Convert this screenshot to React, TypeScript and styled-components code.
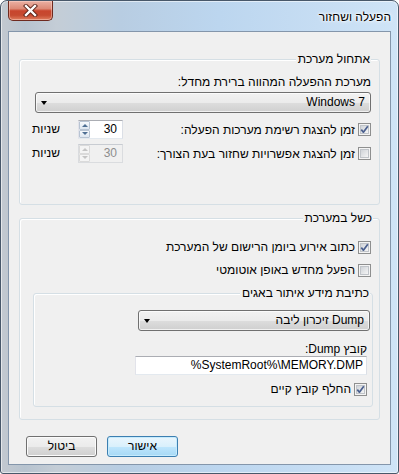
import React from 'react'
import styled, { createGlobalStyle } from 'styled-components'

const GlobalStyle = createGlobalStyle`
  html, body {
    margin: 0;
    padding: 0;
    background: #ffffff;
  }
  body {
    font-family: "Liberation Sans", "DejaVu Sans", sans-serif;
    font-size: 12px;
    color: #000;
  }
`

const Frame = styled.div`
  width: 399px;
  height: 474px;
  box-sizing: border-box;
  border: 1px solid #48586a;
  border-radius: 7px 7px 3px 3px;
  background: linear-gradient(90deg, #c3c9d0 0%, #b7c3cf 6%, #c4cdd6 14%, #b8cde2 30%, #bcd6ef 55%, #c6ddf3 80%, #cfe4f7 100%);
  box-shadow: inset 0 0 0 1px rgba(255, 255, 255, 0.55);
  display: flex;
  flex-direction: column;
  padding: 0 7px 8px 7px;
  direction: rtl;
`

const TitleBar = styled.div`
  height: 30px;
  display: flex;
  align-items: flex-start;
`

const Title = styled.div`
  line-height: 15px;
  padding-top: 9px;
  text-shadow: 0 0 5px #fff, 0 0 3px #fff, 0 0 2px #fff;
`

const CloseButton = styled.div`
  margin-right: auto;
  width: 45px;
  height: 20px;
  box-sizing: border-box;
  border: 1px solid #6e2a1f;
  border-top: none;
  border-radius: 0 0 5px 5px;
  background: linear-gradient(#eab1a4 0%, #dc8a77 40%, #c8452d 52%, #c64a30 75%, #e07e5f 100%);
  box-shadow: inset 0 0 0 1px rgba(255, 220, 210, 0.45);
  display: flex;
  align-items: center;
  justify-content: center;
`

const Client = styled.div`
  flex: 1;
  background: #f0f0f0;
  border: 1px solid #8496ab;
  padding: 20px 10px 0 10px;
  display: flex;
  flex-direction: column;
`

const Group = styled.fieldset<{ $pr: number; $pl: number; $pt: number; $pb: number }>`
  margin: 0;
  border: 1px solid #d5dfe5;
  border-radius: 3px;
  box-shadow: inset 1px 1px 0 #fff;
  padding: ${p => `${p.$pt}px ${p.$pr}px ${p.$pb}px ${p.$pl}px`};
  min-width: 0;
  display: flex;
  flex-direction: column;
`

const Legend = styled.legend`
  padding: 0 1px 0 2px;
  line-height: 15px;
  background: #f0f0f0;
`

const Label = styled.div<{ $mt?: number; $mr?: number }>`
  line-height: 15px;
  height: 15px;
  margin-top: ${p => p.$mt ?? 0}px;
  margin-right: ${p => p.$mr ?? 0}px;
`

const Combo = styled.div<{ $w?: number; $mt: number }>`
  height: 21px;
  box-sizing: border-box;
  width: ${p => (p.$w ? `${p.$w}px` : 'auto')};
  margin-top: ${p => p.$mt}px;
  border: 1px solid #707070;
  border-radius: 3px;
  background: linear-gradient(#f2f2f2 0%, #ebebeb 50%, #dddddd 51%, #cfcfcf 100%);
  box-shadow: inset 0 0 0 1px rgba(255, 255, 255, 0.7);
  display: flex;
  align-items: center;
  padding: 0 5px 0 5px;
  line-height: 15px;
`

const ComboText = styled.span`
  flex: 1;
`

const Arrow = styled.span`
  width: 0;
  height: 0;
  border-left: 3.5px solid transparent;
  border-right: 3.5px solid transparent;
  border-top: 4px solid #000;
`

const Row = styled.div<{ $mt: number; $mr?: number }>`
  display: flex;
  align-items: center;
  height: 19px;
  margin-top: ${p => p.$mt}px;
  margin-right: ${p => p.$mr ?? 0}px;
`

const CheckLine = styled.label<{ $mt: number; $mr?: number }>`
  display: flex;
  align-items: center;
  height: 15px;
  line-height: 15px;
  margin-top: ${p => p.$mt}px;
  margin-right: ${p => p.$mr ?? 0}px;
`

const CheckText = styled.span`
  margin-right: 3px;
  flex: 1;
`

const Spin = styled.div<{ $disabled?: boolean }>`
  width: 45px;
  height: 19px;
  box-sizing: border-box;
  margin-left: 18px;
  border: 1px solid;
  border-color: ${p => (p.$disabled ? '#c8ccd2 #dadcdf #dadcdf #dadcdf' : '#abadb3 #dbdfe6 #e3e9ef #e2e3ea')};
  background: ${p => (p.$disabled ? '#f0f0f0' : '#ffffff')};
  color: ${p => (p.$disabled ? '#8d8d8d' : '#000')};
  display: flex;
  align-items: center;
  direction: ltr;
`

const SpinButtons = styled.div`
  width: 11px;
  height: 17px;
  display: flex;
  flex-direction: column;
`

const SpinBtn = styled.div<{ $disabled?: boolean }>`
  flex: 1;
  border: 1px solid ${p => (p.$disabled ? '#dadada' : '#b8c4d3')};
  border-radius: 1px;
  background: ${p => (p.$disabled ? '#f4f4f4' : 'linear-gradient(#f6f9fc, #dde6f0)')};
  display: flex;
  align-items: center;
  justify-content: center;
`

const TriUp = styled.span<{ $disabled?: boolean }>`
  width: 0;
  height: 0;
  border-left: 3px solid transparent;
  border-right: 3px solid transparent;
  border-bottom: 3px solid ${p => (p.$disabled ? '#c4c4c4' : '#4e6f93')};
`

const TriDown = styled.span<{ $disabled?: boolean }>`
  width: 0;
  height: 0;
  border-left: 3px solid transparent;
  border-right: 3px solid transparent;
  border-top: 3px solid ${p => (p.$disabled ? '#c4c4c4' : '#4e6f93')};
`

const SpinValue = styled.span`
  flex: 1;
  text-align: right;
  padding-right: 5px;
  line-height: 15px;
`

const Units = styled.span`
  width: 25px;
  line-height: 15px;
`

const TextInput = styled.div`
  width: 232px;
  height: 19px;
  box-sizing: border-box;
  margin-right: 3px;
  border: 1px solid;
  border-color: #abadb3 #dbdfe6 #e3e9ef #e2e3ea;
  background: #fff;
  direction: ltr;
  text-align: right;
  padding-right: 3px;
  line-height: 17px;
`

const ButtonRow = styled.div`
  display: flex;
  justify-content: flex-end;
  gap: 10px;
  margin-top: 16px;
  padding-left: 7px;
`

const Button = styled.div<{ $default?: boolean }>`
  width: 71px;
  height: 21px;
  box-sizing: border-box;
  border: 1px solid ${p => (p.$default ? '#3c7fb1' : '#707070')};
  border-radius: 3px;
  background: ${p =>
    p.$default
      ? 'linear-gradient(#eaf6fd 0%, #d9f0fc 50%, #bee6fd 51%, #a7d9f5 100%)'
      : 'linear-gradient(#f2f2f2 0%, #ebebeb 50%, #dddddd 51%, #cfcfcf 100%)'};
  box-shadow: inset 0 0 0 1px ${p => (p.$default ? '#c6ebfd' : '#fbfbfb')};
  display: flex;
  align-items: center;
  justify-content: center;
  line-height: 15px;
`

const Checkbox = ({ checked }: { checked?: boolean }) => (
  <svg width="13" height="13" viewBox="0 0 13 13">
    <defs>
      <linearGradient id="cbg" x1="0" y1="0" x2="1" y2="1">
        <stop offset="0" stopColor="#cdd1d6" />
        <stop offset="1" stopColor="#f7f7f7" />
      </linearGradient>
    </defs>
    <rect x="0.5" y="0.5" width="12" height="12" fill="#f4f4f4" stroke="#8e8f8f" />
    <rect x="2.5" y="2.5" width="8" height="8" fill="url(#cbg)" stroke="#c0c4c9" />
    {checked && (
      <path d="M3.3 6.6 L5.4 9.2 L9.8 3.2" fill="none" stroke="#4a5f8e" strokeWidth="1.7" strokeLinejoin="round" />
    )}
  </svg>
)

const CloseGlyph = () => (
  <svg width="15" height="13" viewBox="0 0 15 13">
    <path d="M3 2 L12 11 M12 2 L3 11" stroke="#5a2218" strokeWidth="4.2" strokeLinecap="square" />
    <path d="M3 2 L12 11 M12 2 L3 11" stroke="#ffffff" strokeWidth="2.4" strokeLinecap="square" />
  </svg>
)

const SpinBox = ({ disabled }: { disabled?: boolean }) => (
  <Spin $disabled={disabled}>
    <SpinButtons>
      <SpinBtn $disabled={disabled}>
        <TriUp $disabled={disabled} />
      </SpinBtn>
      <SpinBtn $disabled={disabled}>
        <TriDown $disabled={disabled} />
      </SpinBtn>
    </SpinButtons>
    <SpinValue>30</SpinValue>
  </Spin>
)

const App = () => {
  return (
    <>
      <GlobalStyle />
      <Frame>
        <TitleBar>
          <Title>הפעלה ושחזור</Title>
          <CloseButton>
            <CloseGlyph />
          </CloseButton>
        </TitleBar>
        <Client>
          <Group $pt={8} $pr={8} $pl={15} $pb={41}>
            <Legend>אתחול מערכת</Legend>
            <Label>מערכת ההפעלה המהווה ברירת מחדל:</Label>
            <Combo $mt={2}>
              <ComboText>Windows 7</ComboText>
              <Arrow />
            </Combo>
            <Row $mt={7}>
              <Checkbox checked />
              <CheckText>זמן להצגת רשימת מערכות הפעלה:</CheckText>
              <SpinBox />
              <Units>שניות</Units>
            </Row>
            <Row $mt={5}>
              <Checkbox />
              <CheckText>זמן להצגת אפשרויות שחזור בעת הצורך:</CheckText>
              <SpinBox disabled />
              <Units>שניות</Units>
            </Row>
          </Group>

          <Group $pt={7} $pr={6} $pl={13} $pb={12} style={{ marginTop: 6 }}>
            <Legend>כשל במערכת</Legend>
            <CheckLine $mt={7} $mr={2}>
              <Checkbox checked />
              <CheckText>כתוב אירוע ביומן הרישום של המערכת</CheckText>
            </CheckLine>
            <CheckLine $mt={8} $mr={2}>
              <Checkbox />
              <CheckText>הפעל מחדש באופן אוטומטי</CheckText>
            </CheckLine>
            <Group $pt={9} $pr={2} $pl={0} $pb={9} style={{ marginTop: 8 }}>
              <Legend>כתיבת מידע איתור באגים</Legend>
              <Combo $w={232} $mt={0}>
                <ComboText>Dump זיכרון ליבה</ComboText>
                <Arrow />
              </Combo>
              <Label $mt={12} $mr={3} style={{ height: 13, lineHeight: '13px' }}>
                קובץ Dump:
              </Label>
              <TextInput>%SystemRoot%\MEMORY.DMP</TextInput>
              <CheckLine $mt={7} $mr={3}>
                <Checkbox checked />
                <CheckText>החלף קובץ קיים</CheckText>
              </CheckLine>
            </Group>
          </Group>

          <ButtonRow>
            <Button $default>אישור</Button>
            <Button>ביטול</Button>
          </ButtonRow>
        </Client>
      </Frame>
    </>
  )
}

export default App
